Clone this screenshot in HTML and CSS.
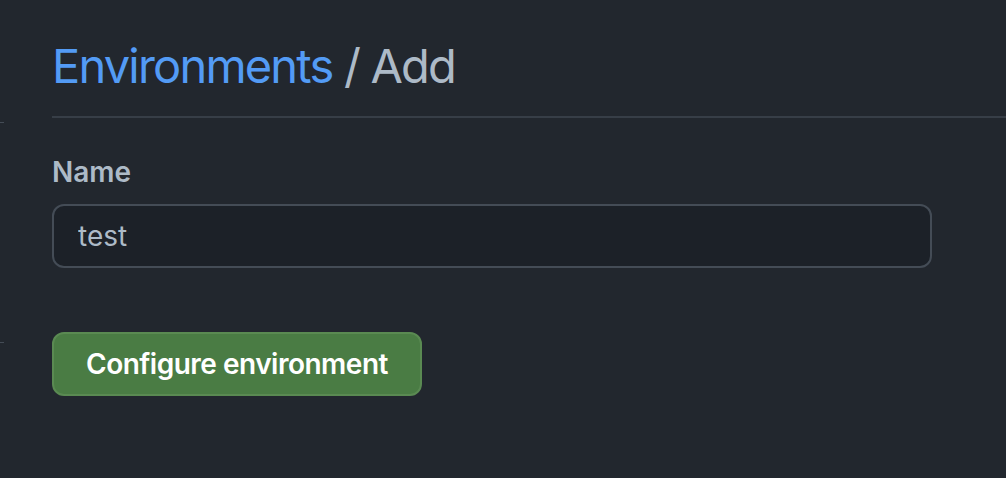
FILE: index.html
```html
<!DOCTYPE html>
<html lang="en">
<head>
<meta charset="utf-8">
<title>Environments / Add</title>
<link rel="stylesheet" href="styles.css">
</head>
<body>
<div class="layout">
  <div class="side">
    <span class="tick tick-top"></span>
    <span class="tick tick-bottom"></span>
  </div>
  <main class="main">
    <div class="subhead">
      <h1 class="subhead-title"><a class="crumb" href="#">Environments</a> / Add</h1>
    </div>
    <form class="form">
      <label class="label" for="name">Name</label>
      <input class="input" id="name" type="text" value="test">
      <button class="btn-primary" type="button">Configure environment</button>
    </form>
  </main>
</div>
</body>
</html>
```
FILE: styles.css
```css
html, body {
  margin: 0;
  padding: 0;
  background: #22272e;
  height: 100%;
}
body {
  font-family: Inter, "Noto Sans", sans-serif;
  color: #adbac7;
  overflow: hidden;
}
.layout {
  display: flex;
  height: 100%;
}
.side {
  width: 4px;
  flex: none;
  display: flex;
  flex-direction: column;
}
.tick {
  display: block;
  width: 4px;
  height: 1px;
  background: #444c56;
}
.tick-top {
  margin-top: 122px;
}
.tick-bottom {
  margin-top: 219px;
}
.main {
  flex: 1;
  padding-left: 48px;
}
.subhead {
  padding-top: 36px;
  padding-bottom: 20px;
  border-bottom: 2px solid #373e47;
}
.subhead-title {
  margin: 0;
  font-size: 47px;
  line-height: 60px;
  font-weight: 400;
  letter-spacing: -1.8px;
  color: #adbac7;
}
.crumb {
  color: #539bf5;
  text-decoration: none;
}
.form {
  display: flex;
  flex-direction: column;
  align-items: flex-start;
  padding-top: 34px;
}
.label {
  font-size: 28px;
  line-height: 40px;
  font-weight: 600;
  color: #adbac7;
}
.input {
  margin-top: 12px;
  box-sizing: border-box;
  width: 880px;
  height: 64px;
  padding: 0 24px;
  border: 2px solid #444c56;
  border-radius: 12px;
  background: #1c2128;
  color: #adbac7;
  font-family: inherit;
  font-size: 28px;
  outline: none;
}
.btn-primary {
  margin-top: 64px;
  box-sizing: border-box;
  height: 64px;
  padding: 0 32px;
  border: 2px solid #5a8a52;
  border-radius: 12px;
  background: #4a7c44;
  color: #ffffff;
  font-family: inherit;
  font-size: 28px;
  font-weight: 600;
  letter-spacing: -0.5px;
  cursor: pointer;
}
```
